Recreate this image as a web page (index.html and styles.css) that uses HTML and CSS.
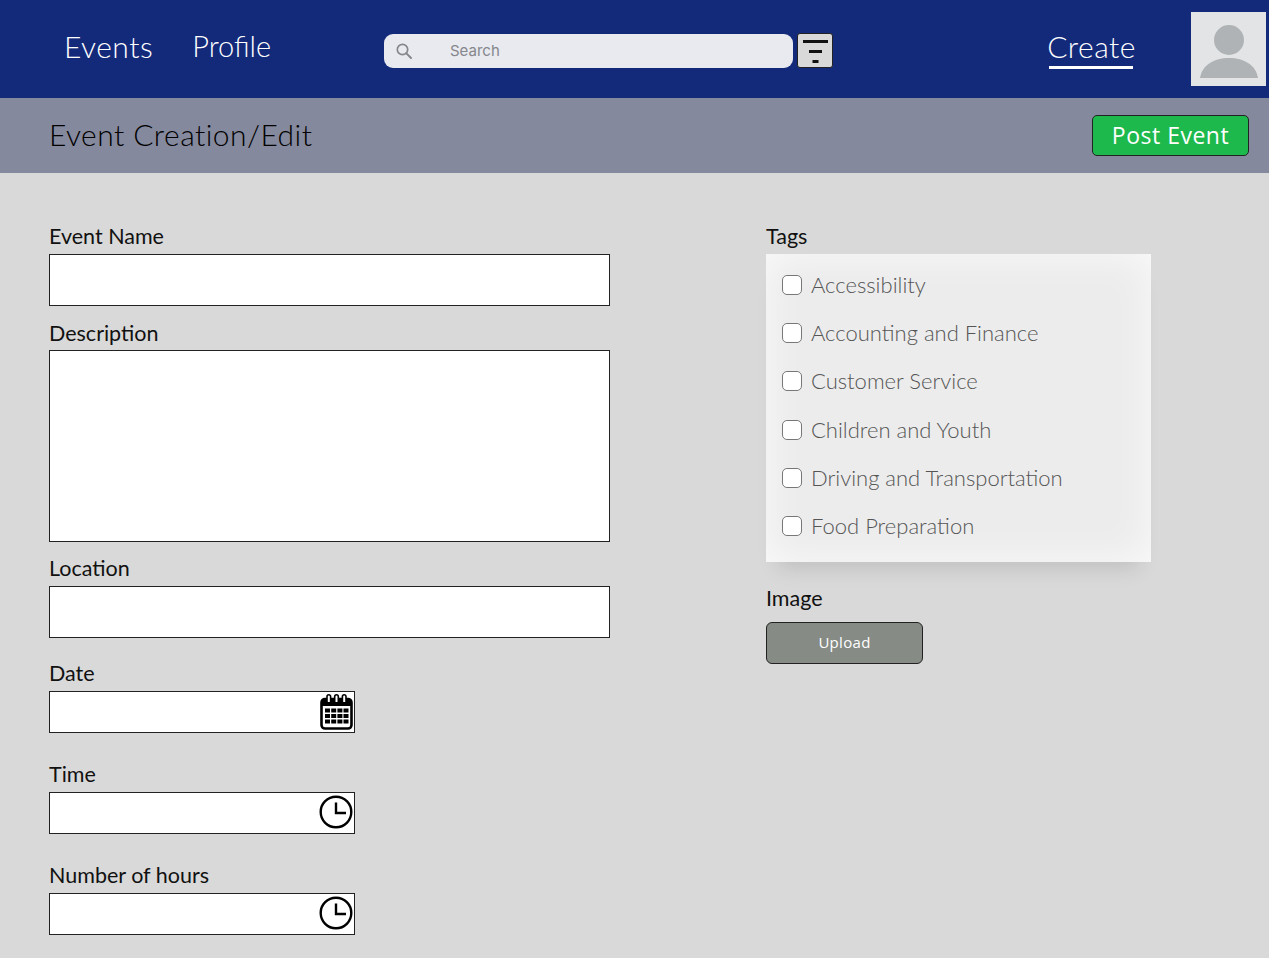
FILE: index.html

```html
<!DOCTYPE html>
<html lang="en">
<head>
  <meta charset="UTF-8">
  <title>Event Creation/Edit</title>
  <link rel="stylesheet" href="styles.css">
</head>
<body>
<header class="topbar">
  <nav class="nav">
    <a class="nav-link" href="#">Events</a>
    <a class="nav-link nav-link-tight" href="#">Profile</a>
  </nav>
  <div class="search">
    <svg class="search-icon" width="18" height="18" viewBox="0 0 18 18"><circle cx="7.500" cy="7.500" r="5.200" fill="none" stroke="#85878c" stroke-width="1.700"/><path d="M11.400 11.400 16 16" stroke="#85878c" stroke-width="2" stroke-linecap="round"/></svg>
    <input class="search-input" type="text" placeholder="Search">
  </div>
  <button class="filter-btn" type="button">
    <svg width="25" height="25" viewBox="0 0 25 25"><path d="M0 2h25v3H0zM6 12h13v3H6zM9.500 22h6v3h-6z" fill="#111"/></svg>
  </button>
  <a class="create-link" href="#">Create</a>
  <div class="avatar">
    <svg width="60" height="54" viewBox="0 0 60 54"><circle cx="30" cy="15" r="15" fill="#afb3b5"/><path d="M1 53C3 40 15 33 30 33s27 7 29 20z" fill="#afb3b5"/></svg>
  </div>
</header>

<div class="subbar">
  <h1 class="page-title">Event Creation/Edit</h1>
  <button class="post-btn" type="button">Post Event</button>
</div>

<main class="content">
  <form class="col-left">
    <label class="lbl" for="name">Event Name</label>
    <input class="box box-wide" id="name" type="text">

    <label class="lbl lbl-desc" for="desc">Description</label>
    <textarea class="box box-wide box-area" id="desc"></textarea>

    <label class="lbl lbl-loc" for="loc">Location</label>
    <input class="box box-wide" id="loc" type="text">

    <label class="lbl lbl-date" for="date">Date</label>
    <div class="box box-icon">
      <input class="plain" id="date" type="text">
      <svg class="cal" width="33" height="37" viewBox="0 0 33 37">
        <rect x="1.500" y="6" width="30" height="29.500" rx="3.500" fill="#fff" stroke="#000" stroke-width="2.600"/>
        <path d="M1 10a4 4 0 0 1 4-4h23a4 4 0 0 1 4 4v3H1z" fill="#000"/>
        <path d="M7 9V3.500a1.800 1.800 0 0 1 3.600 0V9M14.700 9V3.500a1.800 1.800 0 0 1 3.600 0V9M22.400 9V3.500a1.800 1.800 0 0 1 3.600 0V9" fill="#fff" stroke="#000" stroke-width="1.600"/>
        <path d="M5 15.500h5v4H5zM11.200 15.500h5v4h-5zM17.400 15.500h5v4h-5zM23.500 15.500h5v4h-5zM5 21h5v4H5zM11.200 21h5v4h-5zM17.400 21h5v4h-5zM23.500 21h5v4h-5zM5 26.500h5v4H5zM11.200 26.500h5v4h-5zM17.400 26.500h5v4h-5zM23.500 26.500h5v4h-5z" fill="#000"/>
      </svg>
    </div>

    <label class="lbl lbl-time" for="time">Time</label>
    <div class="box box-icon">
      <input class="plain" id="time" type="text">
      <svg class="clock" width="34" height="34" viewBox="0 0 34 34"><circle cx="17" cy="17" r="15.300" fill="#fff" stroke="#000" stroke-width="2.400"/><path d="M17 7.500V18h10" fill="none" stroke="#000" stroke-width="2.400"/></svg>
    </div>

    <label class="lbl lbl-time" for="hours">Number of hours</label>
    <div class="box box-icon">
      <input class="plain" id="hours" type="text">
      <svg class="clock" width="34" height="34" viewBox="0 0 34 34"><circle cx="17" cy="17" r="15.300" fill="#fff" stroke="#000" stroke-width="2.400"/><path d="M17 7.500V18h10" fill="none" stroke="#000" stroke-width="2.400"/></svg>
    </div>
  </form>

  <section class="col-right">
    <div class="lbl">Tags</div>
    <div class="tags">
      <label class="tag"><input class="check" type="checkbox"><span>Accessibility</span></label>
      <label class="tag"><input class="check" type="checkbox"><span>Accounting and Finance</span></label>
      <label class="tag"><input class="check" type="checkbox"><span>Customer Service</span></label>
      <label class="tag"><input class="check" type="checkbox"><span>Children and Youth</span></label>
      <label class="tag"><input class="check" type="checkbox"><span>Driving and Transportation</span></label>
      <label class="tag"><input class="check" type="checkbox"><span>Food Preparation</span></label>
    </div>
    <div class="lbl lbl-image">Image</div>
    <button class="upload-btn" type="button">Upload</button>
  </section>
</main>
</body>
</html>
```

FILE: styles.css

```css
* { box-sizing: border-box; }
html, body { height: 100%; }
body { margin: 0; background: #d9d9d9; font-family: "Lato", sans-serif; overflow: hidden; }

.topbar { height: 98px; background: #132a7a; display: flex; align-items: center; padding: 0 3px 0 64px; }
.nav { display: flex; gap: 40px; width: 320px; margin-top: -7px; }
.nav-link { color: #fff; text-decoration: none; font-size: 30px; font-weight: 300; line-height: 36px; letter-spacing: 0.5px; }
.nav-link-tight { font-size: 29px; letter-spacing: 0; margin-left: -1px; }
.search { width: 409px; height: 34px; background: #e9eaef; border-radius: 9px; display: flex; align-items: center; padding-left: 11px; margin-top: 4px; }
.search-icon { flex: none; margin-top: -1px; }
.search-input { border: 0; background: none; outline: 0; margin: -2px 0 0 37px; width: 300px; font-family: "Inter", sans-serif; font-size: 15px; padding: 0; }
.search-input::placeholder { color: #85878c; opacity: 1; }
.filter-btn { width: 36px; height: 35px; margin: 3px 0 0 4px; padding: 0; background: #d9d9d9; border: 1px solid #222; border-radius: 3px; display: flex; align-items: center; justify-content: center; }
.create-link { margin: -1px 0 0 auto; color: #fff; text-decoration: none; font-size: 30px; font-weight: 300; line-height: 36px; letter-spacing: 0.5px; }
.create-link::after { content: ""; display: block; height: 3px; margin: 2px 3px 0 2px; background: #fff; }
.avatar { width: 75px; height: 74px; margin-left: 55px; margin-top: -1px; background: #e3e4e6; display: flex; justify-content: center; align-items: flex-end; padding-bottom: 7px; }

.subbar { height: 75px; background: #85899d; display: flex; align-items: center; justify-content: space-between; padding: 0 20px 0 49px; }
.page-title { margin: -4px 0 0; font-size: 30px; font-weight: 300; color: #000; line-height: 36px; letter-spacing: 0.45px; }
.post-btn { width: 157px; height: 41px; background: #1db94c; border: 1px solid #222; border-radius: 5px; color: #fff; font-family: "Open Sans", sans-serif; font-size: 23px; letter-spacing: 0.5px; padding: 0 0 2px; }

.content { display: grid; grid-template-columns: 717px 385px; padding: 52px 0 0 49px; }
.col-left, .col-right { display: flex; flex-direction: column; align-items: flex-start; }

.lbl { display: block; font-size: 21.500px; line-height: 22px; color: #111; margin-bottom: 5px; height: 24px; }
.lbl-desc { margin-top: 16px; margin-bottom: 4px; }
.lbl-loc { margin-top: 15px; }
.lbl-date { margin-top: 24px; }
.lbl-time { margin-top: 30px; }
.lbl-image { margin-top: 25px; margin-bottom: 11px; }

.box { background: #fff; border: 1px solid #222; border-radius: 0; margin: 0; padding: 0 8px; font-size: 16px; font-family: inherit; }
.box-wide { width: 561px; height: 52px; }
.box-area { height: 192px; resize: none; }
.box-icon { width: 306px; height: 42px; display: flex; align-items: center; justify-content: space-between; padding: 0 1px 2px 8px; }
.plain { border: 0; outline: 0; background: none; flex: 1; min-width: 0; font-size: 16px; padding: 0; }
.cal { flex: none; }
.clock { flex: none; }

.tags { width: 385px; height: 308px; padding: 7px 16px 0; background: #ececec; box-shadow: 0 18px 20px -12px rgba(0, 0, 0, 0.12), inset 0 0 40px rgba(255, 255, 255, 0.75); }
.tag { display: flex; align-items: center; height: 48.200px; font-size: 22px; font-weight: 300; color: #555; }
.tag span { margin-top: -1px; }
.check { appearance: none; width: 20px; height: 20px; margin: 0 9px 0 0; background: #fff; border: 1px solid #777; border-radius: 5px; flex: none; }

.upload-btn { width: 157px; height: 42px; background: #868b85; border: 1px solid #222; border-radius: 6px; color: #fff; font-family: "Open Sans", sans-serif; font-size: 15px; letter-spacing: 0.3px; padding: 0 0 2px; }
```
